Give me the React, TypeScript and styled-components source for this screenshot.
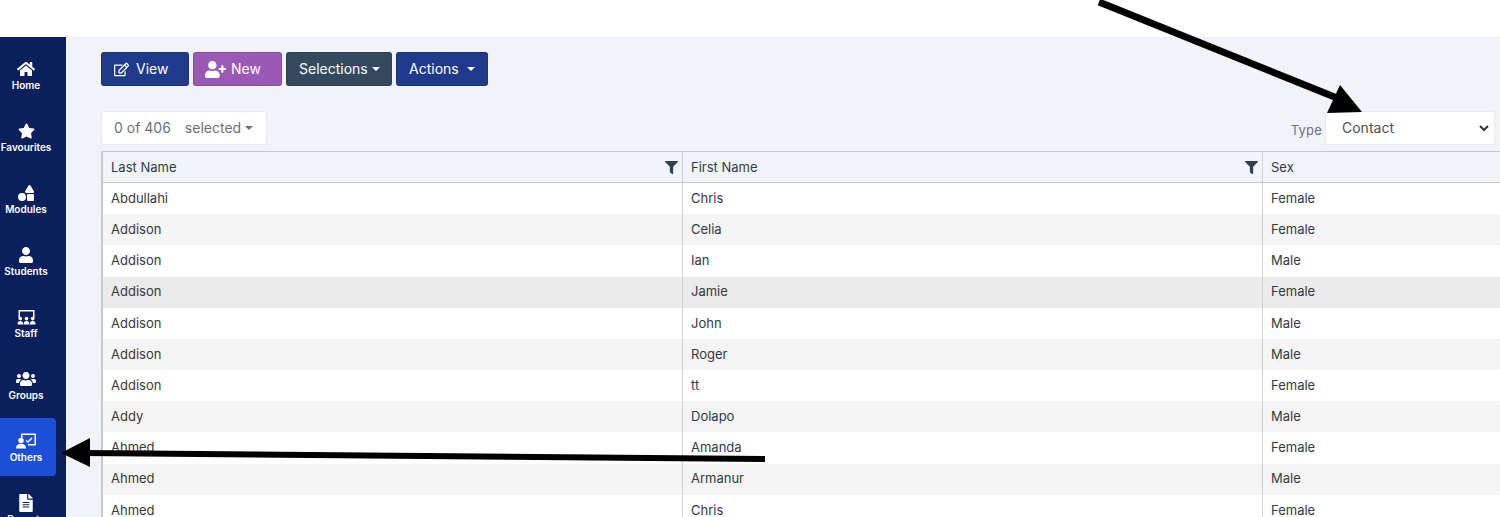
import React from "react";
import styled, { createGlobalStyle } from "styled-components";
import { FaHome, FaStar, FaShapes, FaUser, FaUsers, FaFileAlt, FaRegEdit, FaUserPlus, FaFilter } from "react-icons/fa";

const Global = createGlobalStyle`
  html, body { margin: 0; padding: 0; height: 517px; overflow: hidden; background: #fff; }
  body { font-family: Inter, "Liberation Sans", sans-serif; }
`;
const Page = styled.div`
  position: relative; width: 1500px; height: 517px; overflow: hidden; padding-top: 37px; box-sizing: border-box; display: flex;
`;
const Sidebar = styled.nav`
  width: 66px; flex: none; background: #0b1f5c; padding-top: 9px; box-sizing: border-box; overflow: hidden;
  display: flex; flex-direction: column; gap: 4px;
`;
const NavItem = styled.div<{ $active?: boolean; $size: number }>`
  width: 56px; height: 58px; flex: none; border-radius: 0 4px 4px 0; display: flex; flex-direction: column; align-items: center; justify-content: flex-start;
  padding: 14px 4px 0 0; box-sizing: border-box; color: #fff; font-size: 10px; font-weight: 600; line-height: 12px;
  background: ${p => (p.$active ? "#1d4ed8" : "transparent")};
  white-space: nowrap;
  svg { width: ${p => p.$size}px; height: 18px; margin-bottom: 1px; flex: none; }
`;
const Main = styled.main`
  flex: 1; min-width: 0; background: #f1f3f8; padding: 15px 0 0 35px; box-sizing: border-box; overflow: hidden;
`;
const Toolbar = styled.div`
  display: flex; gap: 4px; height: 34px;
`;
const Btn = styled.button<{ $bg: string; $w: number; $gap: number; $left: number }>`
  width: ${p => p.$w}px; height: 34px; box-sizing: border-box; border: 1px solid rgba(0,0,0,.12); border-radius: 3px; background: ${p => p.$bg};
  color: #fff; font: 400 14px Inter, sans-serif; display: flex; align-items: center; justify-content: flex-start;
  gap: ${p => p.$gap}px; padding: 0 0 2px ${p => p.$left}px;
  svg { margin-top: 2px; flex: none; }
`;
const Caret = styled.span<{ $c?: string }>`
  display: inline-block; width: 0; height: 0; margin-top: 2px; border-left: 4px solid transparent; border-right: 4px solid transparent;
  border-top: 4px solid ${p => p.$c || "#fff"};
`;
const FilterRow = styled.div`
  display: flex; justify-content: space-between; align-items: flex-end; height: 34px; margin-top: 25px; margin-bottom: 6px;
`;
const Count = styled.div`
  width: 166px; height: 34px; box-sizing: border-box; background: #fff; border: 1px solid #e9ebef; border-radius: 3px; display: flex; align-items: center; padding: 0 0 2px 12px;
  font-size: 14px; color: #6c7178;
  span + span { margin-left: 14px; }
  i { margin-left: 4px; display: flex; }
`;
const TypeBox = styled.div`
  display: flex; align-items: center; gap: 3px; font-size: 13px; color: #6c757d; margin-right: 5px; letter-spacing: .2px;
`;
const TypeLabel = styled.span`
  padding-top: 4px;
`;
const Select = styled.div`
  width: 170px; height: 34px; box-sizing: border-box; background: #fff; border: 1px solid #e9ebef; border-radius: 3px; display: flex; align-items: center; justify-content: space-between;
  padding: 0 4px 2px 16px; font-size: 14px; color: #495057; letter-spacing: 0;
  svg { width: 12px; height: 12px; margin-top: 2px; }
`;
const Table = styled.div`
  width: 1399px; border-top: 1px solid #c8c9cc; border-left: 2px solid #c8c9cc; box-sizing: border-box;
  font-size: 13px; color: #343a40;
`;
const Row = styled.div<{ $bg: string; $h?: number }>`
  display: grid; grid-template-columns: 580px 580px 1fr; height: ${p => p.$h || 31.18}px; background: ${p => p.$bg};
`;
const Cell = styled.div`
  display: flex; align-items: center; justify-content: space-between; padding: 0 4px 0 8px; border-right: 1px solid #d0d1d4; white-space: nowrap; box-sizing: border-box;
  &:last-child { border-right: 0; }
  svg { width: 13px; height: 13px; color: #2f3f55; }
`;
const BodyCell = styled(Cell)`
  padding-bottom: 1.34px;
`;
const HeadRow = styled(Row)`
  border-bottom: 1px solid #c8c9cc; box-sizing: border-box; color: #2f3b4c;
`;
const Overlay = styled.svg`
  position: absolute; inset: 0; width: 1500px; height: 517px; pointer-events: none;
`;
const StaffIcon = () => (
  <svg viewBox="0 0 19 18" fill="currentColor">
    <path d="M1.500 2h16v8h-1.500V3.500H3V10H1.500z" />
    <circle cx="3.300" cy="10.600" r="1.800" /><circle cx="9.500" cy="10.600" r="1.800" /><circle cx="15.700" cy="10.600" r="1.800" />
    <path d="M.4 16.500c0-2.400 1.100-3.500 2.900-3.500s2.900 1.100 2.900 3.500zM6.600 16.500c0-2.400 1.100-3.500 2.900-3.500s2.900 1.100 2.900 3.500zM12.800 16.500c0-2.400 1.100-3.500 2.900-3.500s2.900 1.100 2.900 3.500z" />
  </svg>
);
const OthersIcon = () => (
  <svg viewBox="0 0 20 18" fill="currentColor">
    <path fillRule="evenodd" d="M6 1.500h13a1 1 0 0 1 1 1v10a1 1 0 0 1-1 1h-7v-1.500h6.500v-9h-12V6H5V2.500a1 1 0 0 1 1-1z" />
    <path d="M10 8.500l2 1.500 4-4" fill="none" stroke="currentColor" strokeWidth="1.500" />
    <circle cx="5" cy="8.500" r="2.700" />
    <path d="M0 16.500c0-3.200 1.800-4.700 5-4.700s5 1.500 5 4.700z" />
  </svg>
);
const nav: [string, React.ReactNode, number][] = [
  ["Home", <FaHome />, 18], ["Favourites", <FaStar />, 17], ["Modules", <FaShapes />, 16], ["Students", <FaUser />, 14],
  ["Staff", <StaffIcon />, 19], ["Groups", <FaUsers />, 20], ["Others", <OthersIcon />, 20], ["Reports", <FaFileAlt />, 14],
];
const rows = [
  ["Abdullahi","Chris","Female"],["Addison","Celia","Female"],["Addison","Ian","Male"],["Addison","Jamie","Female"],
  ["Addison","John","Male"],["Addison","Roger","Male"],["Addison","tt","Female"],["Addy","Dolapo","Male"],
  ["Ahmed","Amanda","Female"],["Ahmed","Armanur","Male"],["Ahmed","Chris","Female"],
];
export default function App() {
  return (
    <Page>
      <Global />
      <Sidebar>
        {nav.map(([l, i, s]) => <NavItem key={l} $active={l === "Others"} $size={s}>{i}{l}</NavItem>)}
      </Sidebar>
      <Main>
        <Toolbar>
          <Btn $bg="#1f3a8a" $w={88} $gap={7} $left={12}><FaRegEdit size={15} />View</Btn>
          <Btn $bg="#9b59b6" $w={89} $gap={5} $left={11}><FaUserPlus size={21} />New</Btn>
          <Btn $bg="#34495e" $w={106} $gap={4} $left={12}>Selections<Caret /></Btn>
          <Btn $bg="#1f3a8a" $w={92} $gap={8} $left={12}>Actions<Caret /></Btn>
        </Toolbar>
        <FilterRow>
          <Count><span>0 of 406</span><span>selected</span><i><Caret $c="#6c7178" /></i></Count>
          <TypeBox><TypeLabel>Type</TypeLabel><Select>Contact
            <svg viewBox="0 0 12 12" fill="none" stroke="#333" strokeWidth="2"><path d="M2 4l4 4 4-4" /></svg>
          </Select></TypeBox>
        </FilterRow>
        <Table>
          <HeadRow $bg="#f1f4f9" $h={31}>
            <Cell>Last Name<FaFilter /></Cell><Cell>First Name<FaFilter /></Cell><Cell>Sex</Cell>
          </HeadRow>
          {rows.map((r, i) => (
            <Row key={i} $bg={i === 3 ? "#ebebeb" : i % 2 ? "#f5f5f5" : "#fff"}>
              {r.map((c, j) => <BodyCell key={j}>{c}</BodyCell>)}
            </Row>
          ))}
        </Table>
      </Main>
      <Overlay viewBox="0 0 1500 517">
        <path d="M1099 2L1342 100" stroke="#000" strokeWidth="7" />
        <path d="M1362 112L1327 113L1340 85Z" fill="#000" />
        <path d="M765 459L85 453" stroke="#000" strokeWidth="6" />
        <path d="M61 453L90 438L90 467Z" fill="#000" />
      </Overlay>
    </Page>
  );
}
